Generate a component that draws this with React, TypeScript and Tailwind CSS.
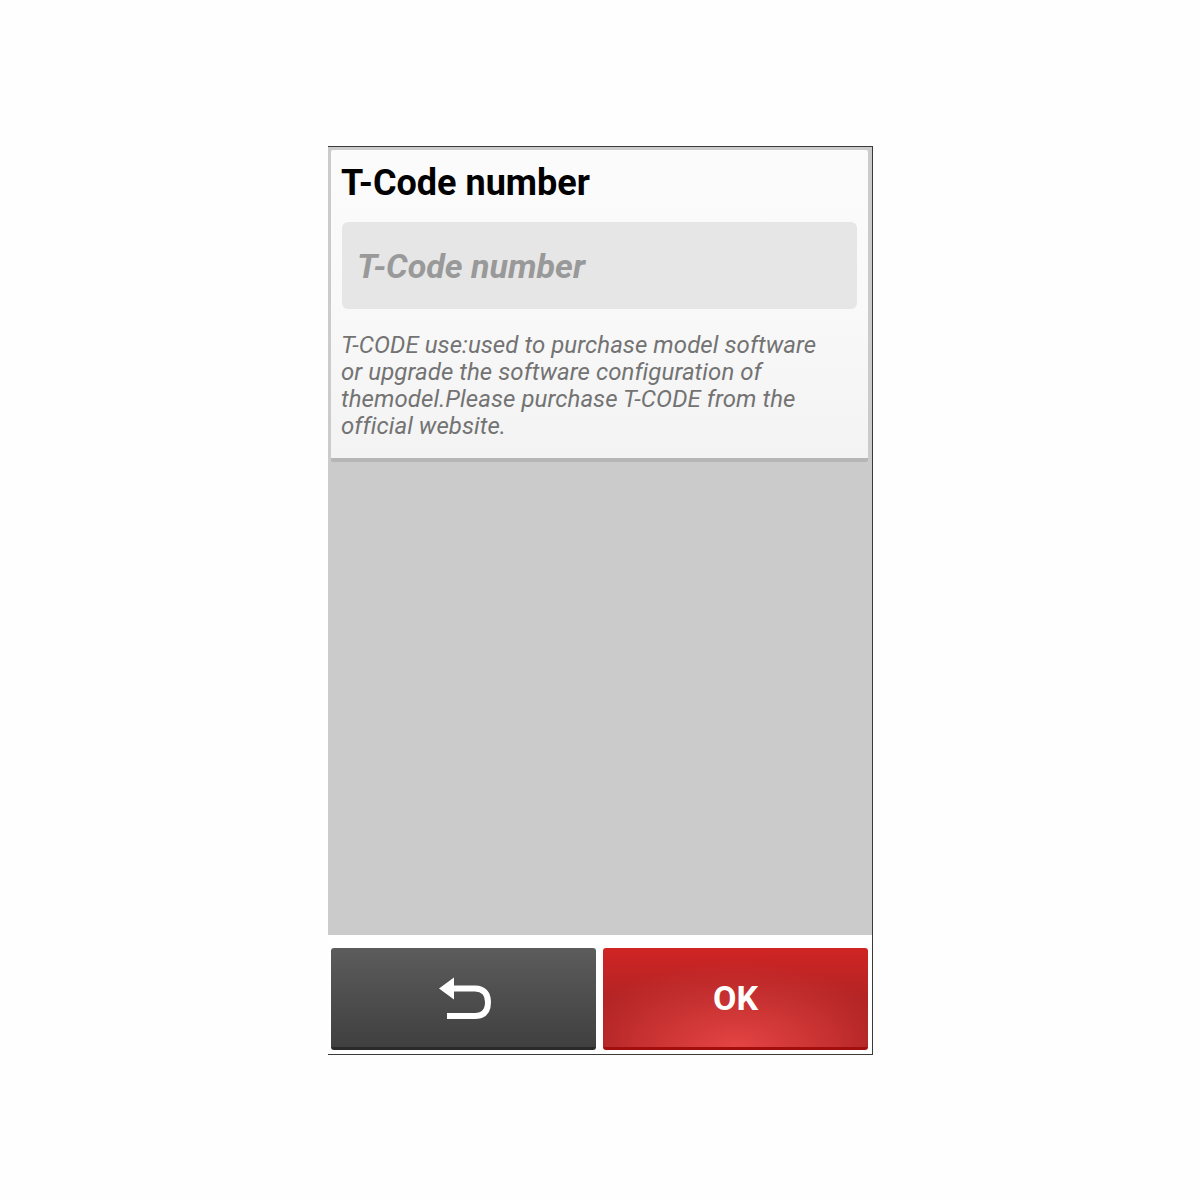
const FONT = "font-['Roboto',sans-serif]";

function BackIcon() {
  return (
    <svg width="54" height="44" viewBox="0 0 54 44" fill="none">
      <path d="M2 12.5 L17 1.5 V23.5 Z" fill="#fff" />
      <path d="M14 12.5 H38 C47 12.5 51 18 51 26 C51 35 47 40 38 40 H10" stroke="#fff" strokeWidth="6" />
    </svg>
  );
}

export default function App() {
  return (
    <div className={`min-h-[1200px] bg-[#fefefe] pt-[146px] pl-[328px] ${FONT}`}>
      <div className="flex h-[909px] w-[545px] flex-col border-t border-r border-b border-[#3a3a3a]">
        {/* Main area */}
        <div className="flex-1 bg-[#cbcbcb] pt-[3px] pl-[3px] pr-[4px]">
          <div className="h-[312px] rounded-[2px] border-b-[4px] border-[#b6b6b6] bg-gradient-to-b from-[#fbfbfb] via-[#f9f9f9] to-[#f3f3f3] pl-[10px]">
            <h1 className="pt-[12px] text-[36px] leading-[42px] font-bold text-black">T-Code number</h1>
            <div className="mt-[18px] ml-[1px] flex h-[87px] w-[515px] items-center rounded-[6px] bg-[#e6e6e6] pt-[2px] pl-[15px]">
              <span className="text-[34px] font-bold italic text-[#999999]">T-Code number</span>
            </div>
            <p className="mt-[23px] w-[500px] text-[24px] leading-[27px] tracking-[0.07px] text-[#737373] italic">
              T-CODE use:used to purchase model software or upgrade the software configuration of themodel.Please purchase T-CODE from the official website.
            </p>
          </div>
        </div>

        {/* Bottom buttons */}
        <div className="flex h-[119px] gap-[7px] bg-white pt-[13px] pl-[3px] pr-[4px]">
          <button className="flex h-[102px] w-[265px] items-center justify-center rounded-[3px] border-b-[3px] border-[#2a2a2a] bg-gradient-to-b from-[#5c5c5c] to-[#404040]">
            <BackIcon />
          </button>
          <button className="relative flex h-[102px] w-[265px] items-center justify-center overflow-hidden rounded-[3px] border-b-[3px] border-[#a30f0f] bg-gradient-to-b from-[#d02424] via-[#b42424] to-[#a62020]">
            <span className="absolute inset-0 bg-[radial-gradient(ellipse_62%_85%_at_50%_100%,#e44444,#c63030_60%,transparent)]" />
            <span className="relative pt-[2px] text-[34px] font-bold text-white">OK</span>
          </button>
        </div>
      </div>
    </div>
  );
}
